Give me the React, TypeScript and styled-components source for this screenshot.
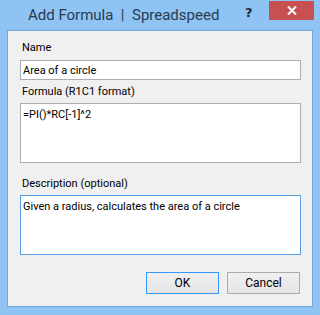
import React from "react";
import styled, { createGlobalStyle } from "styled-components";

const Global = createGlobalStyle`
  html, body { margin: 0; padding: 0; }
  body { width: 320px; height: 315px; overflow: hidden; font-family: Roboto, "Liberation Sans", Arial, sans-serif; }
`;

const Frame = styled.div`
  width: 320px;
  height: 315px;
  box-sizing: border-box;
  background: #8ec3f4;
  display: flex;
  flex-direction: column;
  padding: 0 7px 8px 7px;
`;

const TitleBar = styled.div`
  height: 30px;
  display: flex;
  align-items: flex-start;
`;

const Title = styled.div`
  flex: 1;
  padding: 6px 0 0 21px;
  font-family: Roboto, "Liberation Sans", sans-serif;
  font-size: 15px;
  color: #2a3b4d;
  white-space: nowrap;
`;

const HelpButton = styled.div`
  width: 24px;
  margin-top: 2px;
  font-family: "DejaVu Sans", sans-serif;
  font-weight: bold;
  font-size: 13px;
  color: #1e2a36;
  padding-top: 3px;
  box-sizing: border-box;
`;

const CloseButton = styled.div`
  width: 45px;
  height: 19px;
  margin-top: 1px;
  margin-right: -1px;
  background: #c75050;
  display: flex;
  align-items: center;
  justify-content: center;
`;

const Client = styled.div`
  flex: 1;
  border: 1px solid #6fa6dc;
  background: #f0f0f0;
  display: flex;
  flex-direction: column;
  padding: 9px 11px 0 12px;
`;

const Label = styled.div<{ $mt?: number }>`
  font-size: 11px;
  color: #000;
  height: 15px;
  line-height: 15px;
  margin: ${(p) => p.$mt ?? 0}px 0 ${(p) => (p.$mt ? 4 : 5)}px 2px;
`;

const TextInput = styled.div`
  height: 20px;
  box-sizing: border-box;
  border: 1px solid #abadb3;
  background: #fff;
  font-size: 11px;
  padding: 2px 2px;
  line-height: 15px;
`;

const TextArea = styled.div<{ $focused?: boolean }>`
  height: 60px;
  box-sizing: border-box;
  border: 1px solid ${(p) => (p.$focused ? "#569de5" : "#abadb3")};
  background: #fff;
  font-size: 11px;
  padding: 3px 2px;
  line-height: 15px;
`;

const ButtonRow = styled.div`
  display: flex;
  justify-content: flex-end;
  gap: 8px;
  margin-top: 17px;
  padding-right: 1px;
`;

const Button = styled.div<{ $default?: boolean }>`
  width: 73px;
  height: 22px;
  box-sizing: border-box;
  border: 1px solid ${(p) => (p.$default ? "#3399ff" : "#acacac")};
  background: linear-gradient(#f0f0f0, #e5e5e5);
  font-size: 12px;
  display: flex;
  align-items: center;
  justify-content: center;
`;

export default function App() {
  return (
    <>
      <Global />
      <Frame>
        <TitleBar>
          <Title>Add Formula&nbsp; |&nbsp; Spreadspeed</Title>
          <HelpButton>?</HelpButton>
          <CloseButton>
            <svg width="10" height="9" viewBox="0 0 10 9">
              <path d="M1 0.5 L9 8.5 M9 0.5 L1 8.5" stroke="#fff" strokeWidth="2" />
            </svg>
          </CloseButton>
        </TitleBar>
        <Client>
          <Label>Name</Label>
          <TextInput>Area of a circle</TextInput>
          <Label $mt={4}>Formula (R1C1 format)</Label>
          <TextArea>=PI()*RC[-1]^2</TextArea>
          <Label $mt={13}>Description (optional)</Label>
          <TextArea $focused>Given a radius, calculates the area of a circle</TextArea>
          <ButtonRow>
            <Button $default>OK</Button>
            <Button>Cancel</Button>
          </ButtonRow>
        </Client>
      </Frame>
    </>
  );
}
